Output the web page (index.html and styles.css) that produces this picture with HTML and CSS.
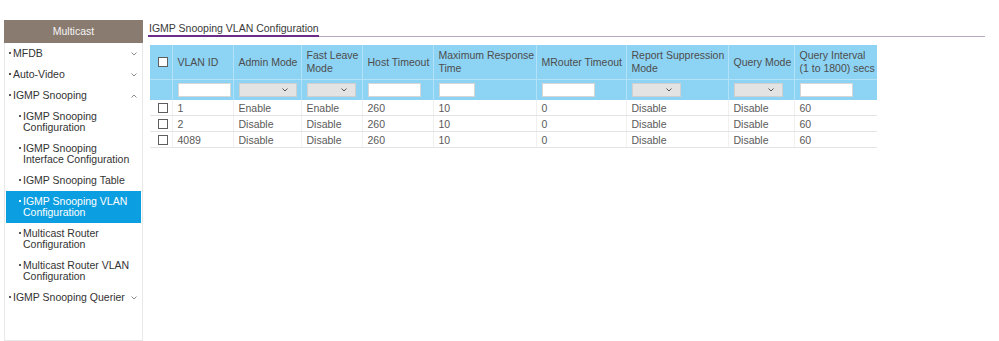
FILE: index.html
```html
<!DOCTYPE html>
<html lang="en">

<head>
    <meta charset="UTF-8">
    <meta name="viewport" content="width=device-width, initial-scale=1.0">
    <title>IGMP Snooping VLAN Configuration</title>
    <link rel="stylesheet" href="styles.css">
</head>

<body>
    <div class="page">
        <aside class="sidebar">
            <div class="side-head">Multicast</div>
            <ul class="menu">
                <li class="item"><span class="dot"></span><span class="label">MFDB</span>
                    <svg class="chev" width="6" height="4" viewBox="0 0 6 4"><polyline points="0.5,0.5 3,3 5.5,0.5" /></svg></li>
                <li class="item"><span class="dot"></span><span class="label">Auto-Video</span>
                    <svg class="chev" width="6" height="4" viewBox="0 0 6 4"><polyline points="0.5,0.5 3,3 5.5,0.5" /></svg></li>
                <li class="item"><span class="dot"></span><span class="label">IGMP Snooping</span>
                    <svg class="chev" width="6" height="4" viewBox="0 0 6 4"><polyline points="0.5,3.5 3,1 5.5,3.5" /></svg></li>
                <li class="item sub"><span class="dot"></span><span class="label">IGMP Snooping<br>Configuration</span></li>
                <li class="item sub"><span class="dot"></span><span class="label">IGMP Snooping<br>Interface Configuration</span></li>
                <li class="item sub"><span class="dot"></span><span class="label">IGMP Snooping Table</span></li>
                <li class="item sub active"><span class="dot"></span><span class="label">IGMP Snooping VLAN<br>Configuration</span></li>
                <li class="item sub"><span class="dot"></span><span class="label">Multicast Router<br>Configuration</span></li>
                <li class="item sub"><span class="dot"></span><span class="label">Multicast Router VLAN<br>Configuration</span></li>
                <li class="item"><span class="dot"></span><span class="label">IGMP Snooping Querier</span>
                    <svg class="chev" width="6" height="4" viewBox="0 0 6 4"><polyline points="0.5,0.5 3,3 5.5,0.5" /></svg></li>
            </ul>
        </aside>

        <main class="content">
            <div class="heading"><span class="heading-text">IGMP Snooping VLAN Configuration</span></div>

            <table class="grid">
                <colgroup>
                    <col style="width:22px">
                    <col style="width:61px">
                    <col style="width:68px">
                    <col style="width:61px">
                    <col style="width:71px">
                    <col style="width:103px">
                    <col style="width:90px">
                    <col style="width:102px">
                    <col style="width:66px">
                    <col style="width:83px">
                </colgroup>
                <tr class="titles">
                    <th class="check-cell"><span class="box"></span></th>
                    <th>VLAN ID</th>
                    <th>Admin Mode</th>
                    <th>Fast Leave<br>Mode</th>
                    <th>Host Timeout</th>
                    <th>Maximum Response<br>Time</th>
                    <th>MRouter Timeout</th>
                    <th>Report Suppression<br>Mode</th>
                    <th>Query Mode</th>
                    <th>Query Interval<br>(1 to 1800) secs</th>
                </tr>
                <tr class="filters">
                    <td class="check-cell"></td>
                    <td><input class="field" type="text"></td>
                    <td><div class="select wide"><svg width="6" height="4" viewBox="0 0 6 4"><polyline points="0.5,0.5 3,3 5.5,0.5" /></svg></div></td>
                    <td><div class="select"><svg width="6" height="4" viewBox="0 0 6 4"><polyline points="0.5,0.5 3,3 5.5,0.5" /></svg></div></td>
                    <td><input class="field" type="text"></td>
                    <td><input class="field short" type="text"></td>
                    <td><input class="field" type="text"></td>
                    <td><div class="select"><svg width="6" height="4" viewBox="0 0 6 4"><polyline points="0.5,0.5 3,3 5.5,0.5" /></svg></div></td>
                    <td><div class="select"><svg width="6" height="4" viewBox="0 0 6 4"><polyline points="0.5,0.5 3,3 5.5,0.5" /></svg></div></td>
                    <td><input class="field" type="text"></td>
                </tr>
                <tr class="row">
                    <td class="check-cell"><span class="box"></span></td>
                    <td>1</td>
                    <td>Enable</td>
                    <td>Enable</td>
                    <td>260</td>
                    <td>10</td>
                    <td>0</td>
                    <td>Disable</td>
                    <td>Disable</td>
                    <td>60</td>
                </tr>
                <tr class="row">
                    <td class="check-cell"><span class="box"></span></td>
                    <td>2</td>
                    <td>Disable</td>
                    <td>Disable</td>
                    <td>260</td>
                    <td>10</td>
                    <td>0</td>
                    <td>Disable</td>
                    <td>Disable</td>
                    <td>60</td>
                </tr>
                <tr class="row">
                    <td class="check-cell"><span class="box"></span></td>
                    <td>4089</td>
                    <td>Disable</td>
                    <td>Disable</td>
                    <td>260</td>
                    <td>10</td>
                    <td>0</td>
                    <td>Disable</td>
                    <td>Disable</td>
                    <td>60</td>
                </tr>
            </table>
        </main>
    </div>
</body>

</html>
```

FILE: styles.css
```css
body {
    margin: 0;
    background-color: #fff;
    color: #333;
    font-family: 'Liberation Sans', Arial, sans-serif;
    font-size: 10.5px;
}

.page {
    display: flex;
    height: 100vh;
}

/* left menu */

.sidebar {
    width: 139px;
    margin: 20px 0 0 4px;
    display: flex;
    flex-direction: column;
}

.side-head {
    height: 23px;
    line-height: 23px;
    text-align: center;
    background-color: #8a7b70;
    color: #f4f4f4;
}

.menu {
    flex: 1;
    list-style: none;
    margin: 0;
    padding: 0 1px;
    border: 1px solid #e8e8e8;
    border-top: none;
}

.item {
    display: flex;
    align-items: flex-start;
    padding: 5px 4px 5px 3px;
    line-height: 11px;
    white-space: nowrap;
}

.item.sub {
    padding-left: 13px;
}

.dot {
    width: 2px;
    height: 2px;
    margin: 4px 2px 0 0;
    background-color: #555;
}

.label {
    flex: 1;
}

.chev {
    margin-top: 4px;
    fill: none;
    stroke: #888;
    stroke-width: 1;
}

.item.active {
    background-color: #0b9ee0;
    color: #fff;
}

.item.active .dot {
    background-color: #fff;
}

/* main area */

.content {
    width: 837px;
    margin-left: 5px;
    padding-top: 22px;
}

.heading {
    line-height: 13px;
    border-bottom: 1px solid #b5abc0;
}

.heading-text {
    display: inline-block;
    padding-left: 1px;
    margin-bottom: -1px;
    border-bottom: 2px solid #6b2d8b;
    color: #3a3a3a;
}

.grid {
    width: 727px;
    margin: 8px 0 0 2px;
    border-collapse: collapse;
    table-layout: fixed;
}

.grid th,
.grid td {
    padding: 0 0 0 5px;
    text-align: left;
    font-weight: normal;
    white-space: nowrap;
}

.titles th {
    height: 34px;
    line-height: 13px;
    background-color: #8cd3f4;
    color: #4d4d4d;
    border-left: 1px solid #b3e1f7;
    border-bottom: 1px solid #b3e1f7;
}

.filters td {
    height: 20px;
    background-color: #8cd3f4;
    border-left: 1px solid #b3e1f7;
}

.titles th:first-child,
.filters td:first-child {
    border-left: none;
}

.row td {
    height: 15px;
    color: #5a5a5a;
    border-left: 1px solid #f0f0f0;
    border-bottom: 1px solid #e4e4e4;
}

.row td:first-child {
    border-left: none;
}

.grid .check-cell {
    padding-left: 8px;
}

.box {
    display: block;
    width: 10px;
    height: 10px;
    box-sizing: border-box;
    border: 1px solid #5e5e5e;
    background-color: #fff;
}

.field {
    display: block;
    width: 53px;
    height: 14px;
    box-sizing: border-box;
    padding: 0;
    border: 1px solid #d6d6d6;
    background-color: #fff;
}

.field.short {
    width: 36px;
}

.select {
    display: flex;
    justify-content: flex-end;
    align-items: center;
    width: 49px;
    height: 14px;
    box-sizing: border-box;
    padding-right: 8px;
    border: 1px solid #cfcfcf;
    background-color: #e3e3e3;
}

.select.wide {
    width: 58px;
}

.select svg {
    fill: none;
    stroke: #555;
    stroke-width: 1;
}
```
